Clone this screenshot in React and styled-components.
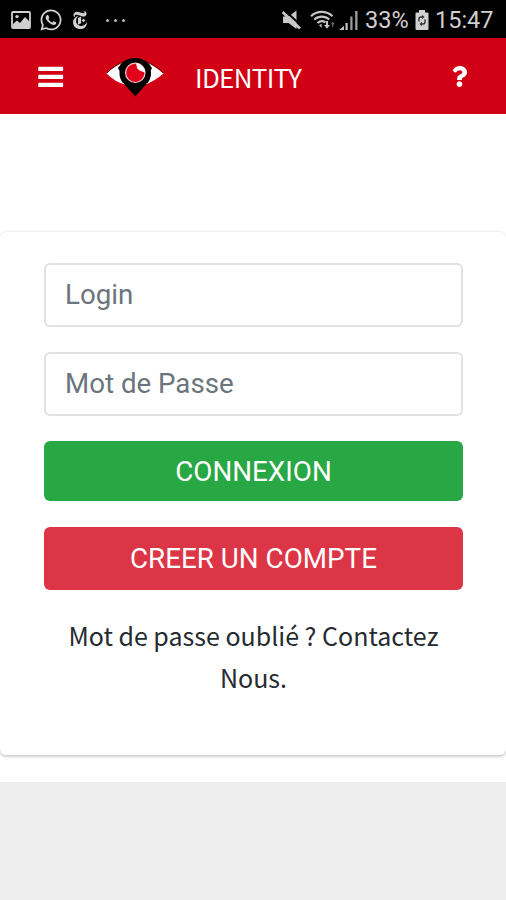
import React from 'react'
import styled, { createGlobalStyle } from 'styled-components'
import { FaQuestion, FaWhatsapp } from 'react-icons/fa'
import { SiNewyorktimes } from 'react-icons/si'

const Picture = () => (
  <svg width="20" height="18" viewBox="0 0 20 18">
    <rect x="1" y="1" width="18" height="16" rx="1" fill="none" stroke="#d0d0d0" strokeWidth="1.8" />
    <circle cx="6" cy="5.6" r="1.7" fill="#d0d0d0" />
    <path d="M2 17v-4l4-3.5 3 2.5 5-6 5 5v6z" fill="#d0d0d0" />
  </svg>
)

const Muted = () => (
  <svg width="20" height="20" viewBox="0 0 20 20">
    <path d="M1 6.5h5.500l8-6V19l-8-6H1z" fill="#c8c8c8" />
    <path d="M2.500 0l17.500 16.500" stroke="#000" strokeWidth="2" />
    <path d="M.5 2l17.500 16.500" stroke="#c8c8c8" strokeWidth="2.8" />
  </svg>
)

const Wifi = () => (
  <svg width="26" height="20" viewBox="0 0 26 20" fill="none" stroke="#c4c4c4" strokeWidth="2.1">
    <path d="M1 6.2C7 .4 16.5 .4 22.5 6.2M4.2 9.6C8.5 5.6 15 5.6 19.3 9.6M7.5 13C10.2 10.6 13 10.6 15.5 12.3" />
    <path d="M9 15.200l2.600-1.500v4z" fill="#c4c4c4" stroke="none" />
    <path d="M17 11v5" />
    <path d="M14 15h6l-3 3.800z" fill="#c4c4c4" stroke="none" />
    <path d="M22.700 17v-4" stroke="#666" strokeWidth="1.300" />
    <path d="M20.700 14.200l2-2.600 2 2.600z" fill="#666" stroke="none" />
  </svg>
)

const Signal = () => (
  <svg width="20" height="20" viewBox="0 0 20 20" fill="#c4c4c4">
    <path d="M0 20l5-4v4z" />
    <rect x="6.500" y="13" width="2.200" height="7" />
    <rect x="11.300" y="6.500" width="2.200" height="13.500" opacity=".8" />
    <rect x="16.200" y="1" width="2.300" height="19" opacity=".8" />
  </svg>
)

const Battery = () => (
  <svg width="14" height="20" viewBox="0 0 14 20">
    <path d="M4 0h6v2.500h2.500q1 0 1 1V19q0 1-1 1h-11q-1 0-1-1V3.500q0-1 1-1H4z" fill="#d0d0d0" />
    <path d="M4 11.500V9q0-2 2-2h1M10 9.500V12q0 2-2 2H7" fill="none" stroke="#333" strokeWidth="1.400" />
    <path d="M7 4.800l2.500 2.200L7 9.200zM7 11.800v4.400l-2.500-2.200z" fill="#333" />
  </svg>
)

const Bars = () => (
  <svg width="26" height="22" viewBox="0 0 26 22" fill="#fff">
    <rect x=".2" y=".7" width="25" height="4.400" rx="1.200" />
    <rect x=".2" y="8.700" width="25" height="4.400" rx="1.200" />
    <rect x=".2" y="16.700" width="25" height="4.400" rx="1.200" />
  </svg>
)

const Eye = () => (
  <svg width="58" height="40" viewBox="0 0 58 40">
    <path d="M.5 16.500Q9 8 19 5H39Q48 8 57.500 16.500Q49 24 39 27.500H19Q9 25 .5 16.500z" fill="#fff" />
    <path d="M1 16Q9 7.500 20 4M38 4Q49 7.500 57 16" fill="none" stroke="#400" strokeWidth=".8" />
    <path d="M12 11Q18 1 29 1T46 11L38 27H20z" fill="#000" />
    <path d="M14 16C14 7 20 1 29 1S44.500 7 44.500 16C44.500 25 38 29 29.300 39.500C20.500 29 14 25 14 16z" fill="#000" />
    <path d="M15 12a15.500 15 0 0 0 2.500 13.500M43.500 12a15.500 15 0 0 1-2.500 13.500" fill="none" stroke="#000" strokeWidth="1.500" />
    <circle cx="29.300" cy="15.800" r="9.700" fill="#e0001b" stroke="#f6c8c8" strokeWidth="1.200" />
    <path d="M30 6.200L31.200 11.500L34 13.700L39 15.500C38.800 10.500 35 6.500 30 6.200z" fill="#fff" />
  </svg>
)

const App = () => (
  <Page>
    <Global />
    <StatusBar>
      <Notices>
        <Picture />
        <FaWhatsapp size={24} />
        <SiNewyorktimes size={18} />
        <Dots><i /><i /><i /></Dots>
      </Notices>
      <System>
        <Muted />
        <Wifi />
        <Signal />
        <Percent>33%</Percent>
        <Battery />
        <Clock>15:47</Clock>
      </System>
    </StatusBar>
    <Header>
      <IconButton aria-label="Menu"><Bars /></IconButton>
      <Brand>
        <Eye />
        <span>IDENTITY</span>
      </Brand>
      <IconButton aria-label="Aide"><FaQuestion size={21} /></IconButton>
    </Header>
    <Main>
      <Card>
        <Input type="text" placeholder="Login" />
        <Input type="password" placeholder="Mot de Passe" />
        <Button $height={60} $color="#28a745">CONNEXION</Button>
        <Button $height={63} $color="#dc3545">CREER UN COMPTE</Button>
        <Forgot>Mot de passe oublié ? Contactez Nous.</Forgot>
      </Card>
    </Main>
  </Page>
)
export default App

const Global = createGlobalStyle`
  * {
    box-sizing: border-box;
  }
  body {
    margin: 0;
    background: #eee;
  }
  svg {
    display: block;
    flex: none;
  }
`
const Page = styled.div`
  min-height: 900px;
  background: #eee;
  font-family: Roboto, "Liberation Sans", sans-serif;
`
const StatusBar = styled.div`
  display: flex;
  justify-content: space-between;
  align-items: center;
  height: 38px;
  padding: 2px 11px 0 11px;
  background: #000;
  color: #d0d0d0;
`
const Notices = styled.div`
  display: flex;
  align-items: center;
  gap: 8px;
`
const Dots = styled.div`
  display: flex;
  gap: 5px;
  margin-left: 9px;
  i {
    width: 3px;
    height: 3px;
    border-radius: 50%;
    background: #b8b8b8;
  }
`
const System = styled.div`
  display: flex;
  align-items: center;
  gap: 6px;
  svg:first-child {
    margin-right: 2px;
  }
  svg:nth-child(2) {
    margin-right: -3px;
  }
`
const Percent = styled.span`
  width: 44px;
  font-size: 23.5px;
  white-space: nowrap;
`
const Clock = styled.span`
  width: 60px;
  font-size: 23.5px;
  white-space: nowrap;
`
const Header = styled.header`
  display: flex;
  align-items: center;
  height: 76px;
  padding: 1px 36px 0 38px;
  background: #d20014;
  color: #fff;
`
const IconButton = styled.button`
  display: flex;
  padding: 0;
  border: 0;
  background: none;
  color: #fff;
`
const Brand = styled.div`
  display: flex;
  flex: 1;
  align-items: center;
  gap: 31px;
  margin-left: 42px;
  span {
    font-family: "Noto Sans CJK SC", sans-serif;
    font-size: 26px;
    letter-spacing: -0.7px;
    line-height: 38px;
  }
`
const Main = styled.main`
  height: 668px;
  padding-top: 118px;
  background: #fff;
`
const Card = styled.form`
  display: flex;
  flex-direction: column;
  gap: 25.5px;
  height: 523px;
  padding: 31px 43px 0 44px;
  border-radius: 6px;
  background: #fff;
  box-shadow: 0 0 3px rgba(0, 0, 0, 0.12), 0 2px 3px rgba(0, 0, 0, 0.16);
`
const Input = styled.input`
  height: 63.5px;
  padding: 0 19px;
  border: 2px solid #dfe1e3;
  border-radius: 6px;
  background: #fff;
  font-family: inherit;
  font-size: 27.7px;
  outline: none;
  &::placeholder {
    color: #6c757d;
    opacity: 1;
  }
`
const Button = styled.button`
  height: ${p => p.$height}px;
  padding: 0;
  border: 0;
  border-radius: 6px;
  background: ${p => p.$color};
  color: #fff;
  font-family: inherit;
  font-size: 27.8px;
`
const Forgot = styled.p`
  margin: -1px 0 0;
  color: #252a30;
  font-family: "Noto Sans CJK SC", sans-serif;
  font-size: 25px;
  line-height: 42px;
  text-align: center;
`
